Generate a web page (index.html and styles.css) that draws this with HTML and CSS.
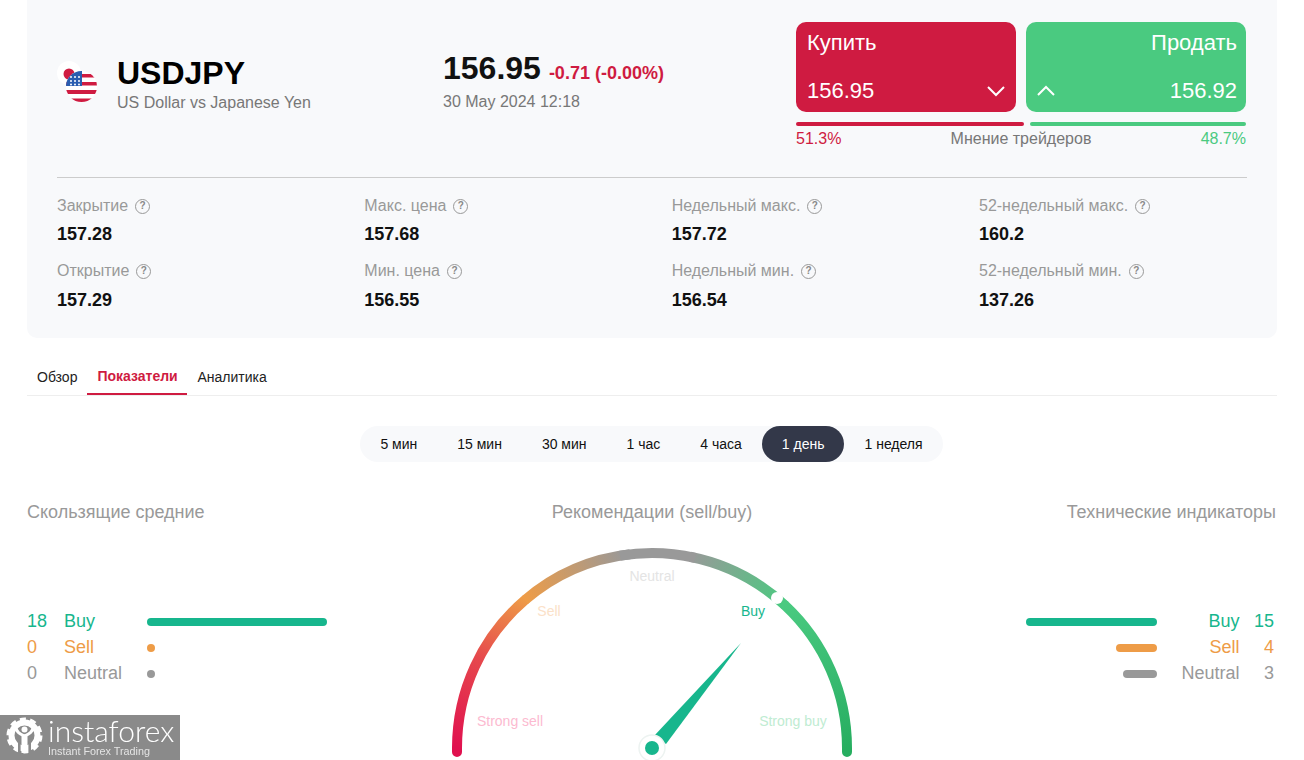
FILE: index.html
```html
<!DOCTYPE html>
<html lang="ru">
<head>
    <meta charset="UTF-8">
    <meta name="viewport" content="width=device-width, initial-scale=1.0">
    <title>USDJPY</title>
    <link rel="stylesheet" href="styles.css">
</head>
<body>
    <div class="page">
        <section class="quote-card">
            <div class="quote-top">
                <div class="symbol">
                    <svg class="flag" width="50" height="50" viewBox="0 0 50 50">
                        <circle cx="13" cy="13" r="12" fill="#fff"/>
                        <circle cx="13" cy="14" r="5.5" fill="#cf1b41"/>
                        <clipPath id="usClip"><circle cx="25.5" cy="26.5" r="15.5"/></clipPath>
                        <g clip-path="url(#usClip)">
                            <rect x="10" y="11" width="31" height="31" fill="#fff"/>
                            <rect x="10" y="14" width="31" height="3.5" fill="#cf1b41"/>
                            <rect x="10" y="22" width="31" height="3.5" fill="#cf1b41"/>
                            <rect x="10" y="30" width="31" height="4" fill="#cf1b41"/>
                            <rect x="10" y="38.5" width="31" height="3.5" fill="#cf1b41"/>
                            <rect x="10" y="11" width="16" height="15" fill="#2a5db0"/>
                            <g fill="#fff">
                                <circle cx="15" cy="17" r="1"/><circle cx="19" cy="17" r="1"/><circle cx="23" cy="17" r="1"/>
                                <circle cx="15" cy="21" r="1"/><circle cx="19" cy="21" r="1"/><circle cx="23" cy="21" r="1"/>
                                <circle cx="15" cy="24.5" r="1"/><circle cx="19" cy="24.5" r="1"/><circle cx="23" cy="24.5" r="1"/>
                            </g>
                        </g>
                    </svg>
                    <div class="symbol-text">
                        <div class="symbol-name">USDJPY</div>
                        <div class="symbol-desc">US Dollar vs Japanese Yen</div>
                    </div>
                </div>
                <div class="price-block">
                    <div class="price-line">
                        <span class="price">156.95</span>
                        <span class="change">-0.71 (-0.00%)</span>
                    </div>
                    <div class="price-date">30 May 2024 12:18</div>
                </div>
                <div class="trade">
                    <div class="trade-buttons">
                        <div class="trade-btn buy-btn">
                            <div class="trade-title">Купить</div>
                            <div class="trade-row">
                                <span>156.95</span>
                                <svg width="20" height="12" viewBox="0 0 20 12"><path d="M2 2l8 8 8-8" fill="none" stroke="#fff" stroke-width="2"/></svg>
                            </div>
                        </div>
                        <div class="trade-btn sell-btn">
                            <div class="trade-title">Продать</div>
                            <div class="trade-row">
                                <svg width="20" height="12" viewBox="0 0 20 12"><path d="M2 10l8-8 8 8" fill="none" stroke="#fff" stroke-width="2"/></svg>
                                <span>156.92</span>
                            </div>
                        </div>
                    </div>
                    <div class="sentiment-bars">
                        <div class="bar-red"></div>
                        <div class="bar-green"></div>
                    </div>
                    <div class="sentiment-text">
                        <span class="red">51.3%</span>
                        <span class="sentiment-title">Мнение трейдеров</span>
                        <span class="green">48.7%</span>
                    </div>
                </div>
            </div>

            <div class="stats">
                <div class="stat">
                    <div class="stat-label">Закрытие <i class="help">?</i></div>
                    <div class="stat-value">157.28</div>
                </div>
                <div class="stat">
                    <div class="stat-label">Макс. цена <i class="help">?</i></div>
                    <div class="stat-value">157.68</div>
                </div>
                <div class="stat">
                    <div class="stat-label">Недельный макс. <i class="help">?</i></div>
                    <div class="stat-value">157.72</div>
                </div>
                <div class="stat">
                    <div class="stat-label">52-недельный макс. <i class="help">?</i></div>
                    <div class="stat-value">160.2</div>
                </div>
                <div class="stat">
                    <div class="stat-label">Открытие <i class="help">?</i></div>
                    <div class="stat-value">157.29</div>
                </div>
                <div class="stat">
                    <div class="stat-label">Мин. цена <i class="help">?</i></div>
                    <div class="stat-value">156.55</div>
                </div>
                <div class="stat">
                    <div class="stat-label">Недельный мин. <i class="help">?</i></div>
                    <div class="stat-value">156.54</div>
                </div>
                <div class="stat">
                    <div class="stat-label">52-недельный мин. <i class="help">?</i></div>
                    <div class="stat-value">137.26</div>
                </div>
            </div>
        </section>

        <nav class="tabs">
            <a class="tab">Обзор</a>
            <a class="tab active">Показатели</a>
            <a class="tab">Аналитика</a>
        </nav>

        <div class="periods-wrap">
            <div class="periods">
                <a class="period">5 мин</a>
                <a class="period">15 мин</a>
                <a class="period">30 мин</a>
                <a class="period">1 час</a>
                <a class="period">4 часа</a>
                <a class="period active">1 день</a>
                <a class="period">1 неделя</a>
            </div>
        </div>

        <div class="indicators">
            <div class="side">
                <h3 class="side-title">Скользящие средние</h3>
                <div class="rows">
                    <div class="row buy"><span class="num">18</span><span class="name">Buy</span><span class="line" style="width:180px"></span></div>
                    <div class="row sell"><span class="num">0</span><span class="name">Sell</span><span class="line" style="width:8px"></span></div>
                    <div class="row neutral"><span class="num">0</span><span class="name">Neutral</span><span class="line" style="width:8px"></span></div>
                </div>
            </div>

            <div class="center">
                <h3 class="side-title">Рекомендации (sell/buy)</h3>
                <svg class="gauge" width="420" height="220" viewBox="442 540 420 220">
                    <defs>
                        <linearGradient id="g1" gradientUnits="userSpaceOnUse" x1="457" y1="748" x2="525" y2="598">
                            <stop offset="0" stop-color="#e0114f"/>
                            <stop offset="0.55" stop-color="#e6484d"/>
                            <stop offset="1" stop-color="#ee9c47"/>
                        </linearGradient>
                        <linearGradient id="g2" gradientUnits="userSpaceOnUse" x1="525" y1="598" x2="625" y2="553">
                            <stop offset="0" stop-color="#ee9c47"/>
                            <stop offset="1" stop-color="#999999"/>
                        </linearGradient>
                        <linearGradient id="g3" gradientUnits="userSpaceOnUse" x1="690" y1="556" x2="785" y2="605">
                            <stop offset="0" stop-color="#999999"/>
                            <stop offset="1" stop-color="#4aca80"/>
                        </linearGradient>
                        <linearGradient id="g4" gradientUnits="userSpaceOnUse" x1="785" y1="605" x2="847" y2="748">
                            <stop offset="0" stop-color="#4aca80"/>
                            <stop offset="0.6" stop-color="#36b96f"/>
                            <stop offset="1" stop-color="#27ae60"/>
                        </linearGradient>
                    </defs>
                    <g fill="none" stroke-width="10">
                        <path d="M457 752V748A195 195 0 0 1 525 600" stroke="url(#g1)" stroke-linecap="round"/>
                        <path d="M525 600A195 195 0 0 1 630 554.25" stroke="url(#g2)"/>
                        <path d="M690 556.74A195 195 0 0 1 785 605.4" stroke="url(#g3)"/>
                        <path d="M620 555.64A195 195 0 0 1 695 557.8" stroke="#999"/>
                        <path d="M785 605.4A195 195 0 0 1 847 748V752" stroke="url(#g4)" stroke-linecap="round"/>
                    </g>
                    <circle cx="777" cy="598" r="6" fill="#fff"/>
                    <g class="gauge-labels" text-anchor="middle">
                        <text x="652" y="581" fill="#e4e4e4">Neutral</text>
                        <text x="549" y="616" fill="#fbe1c8">Sell</text>
                        <text x="753" y="616" fill="#17b68d">Buy</text>
                        <text x="510" y="726" fill="#fcbad0">Strong sell</text>
                        <text x="793" y="726" fill="#c0ecd2">Strong buy</text>
                    </g>
                    <polygon points="741,643 654,736 666,744" fill="#17b68d"/>
                    <circle cx="652" cy="748" r="13" fill="#fff" stroke="#edf3f1" stroke-width="1.5"/>
                    <circle cx="652" cy="748" r="7" fill="#17b68d"/>
                </svg>
            </div>

            <div class="side side-right">
                <h3 class="side-title">Технические индикаторы</h3>
                <div class="rows">
                    <div class="row buy"><span class="line" style="width:131px"></span><span class="name">Buy</span><span class="num">15</span></div>
                    <div class="row sell"><span class="line" style="width:41px"></span><span class="name">Sell</span><span class="num">4</span></div>
                    <div class="row neutral"><span class="line" style="width:34px"></span><span class="name">Neutral</span><span class="num">3</span></div>
                </div>
            </div>
        </div>
    </div>

    <div class="logo">
        <svg width="40" height="40" viewBox="0 0 40 40">
            <g fill="none" stroke="#fff">
                <circle cx="19.5" cy="19.5" r="13" stroke-width="6"/>
                <circle cx="19.5" cy="19.5" r="16.2" stroke-width="3.6" stroke-dasharray="6 4.18"/>
            </g>
            <rect x="13" y="26" width="2.6" height="13" fill="#8a8a8a"/>
            <rect x="23.4" y="26" width="2.6" height="13" fill="#8a8a8a"/>
            <circle cx="19.5" cy="13.5" r="3" fill="#fff"/>
            <path d="M11 11c0 5 4 7 8.500 9 4.500-2 8.500-4 8.500-9" fill="none" stroke="#fff" stroke-width="3"/>
            <rect x="16.500" y="20" width="6" height="17" fill="#fff"/>
        </svg>
        <div class="logo-text">
            <div class="logo-name">instaforex</div>
            <div class="logo-sub">Instant Forex Trading</div>
        </div>
    </div>
</body>
</html>
```

FILE: styles.css
```css
* {
    box-sizing: border-box;
}
html, body {
    height: 760px;
    overflow: hidden;
}
body {
    margin: 0;
    font-family: "Liberation Sans", Arial, sans-serif;
    background-color: #fff;
    color: #111;
}
.page {
    padding: 0 27px;
}

/* карточка котировки */
.quote-card {
    height: 338px;
    padding: 22px 30px 0;
    background-color: #f8f9fb;
    border-radius: 0 0 10px 10px;
}
.quote-top {
    display: flex;
    height: 156px;
    border-bottom: 1px solid #ccc;
}
.symbol {
    display: flex;
    width: 386px;
    padding-top: 25px;
}
.flag {
    flex: none;
    margin: 13px 1px 0 -1px;
}
.symbol-text {
    padding-left: 10px;
}
.symbol-name {
    font-size: 32px;
    font-weight: bold;
    line-height: 52px;
    color: #000;
}
.symbol-desc {
    font-size: 16px;
    line-height: 18px;
    color: #777;
    margin-top: -5px;
}
.price-block {
    padding-top: 26px;
}
.price-line {
    display: flex;
    align-items: baseline;
    gap: 8px;
}
.price {
    font-size: 32px;
    font-weight: bold;
    line-height: 40px;
    color: #111;
}
.change {
    font-size: 18px;
    font-weight: bold;
    color: #cf1b41;
}
.price-date {
    margin-top: 5px;
    font-size: 16px;
    line-height: 18px;
    color: #777;
}
.trade {
    width: 451px;
    margin-left: auto;
}
.trade-buttons {
    display: flex;
    gap: 10px;
}
.trade-btn {
    width: 220px;
    height: 90px;
    padding: 9px 9px 0 11px;
    border-radius: 10px;
    color: #fff;
    font-size: 22px;
}
.buy-btn {
    background-color: #cf1b41;
}
.sell-btn {
    background-color: #4aca80;
    text-align: right;
}
.trade-title {
    line-height: 24px;
}
.trade-row {
    display: flex;
    align-items: center;
    justify-content: space-between;
    margin-top: 24px;
    line-height: 24px;
}
.buy-btn .trade-row svg {
    margin-right: 1px;
}
.sell-btn .trade-row svg {
    margin-left: -1px;
}
.sentiment-bars {
    display: flex;
    justify-content: space-between;
    margin-top: 10px;
    padding-right: 1px;
}
.bar-red, .bar-green {
    height: 4px;
    border-radius: 2px;
}
.bar-red {
    width: 228px;
    background-color: #cf1b41;
}
.bar-green {
    width: 216px;
    background-color: #4aca80;
}
.sentiment-text {
    display: flex;
    justify-content: space-between;
    margin-top: 4px;
    padding-right: 1px;
    font-size: 16px;
    line-height: 18px;
}
.sentiment-title {
    color: #777;
}
.red {
    color: #cf1b41;
}
.green {
    color: #4aca80;
}

/* статистика */
.stats {
    display: grid;
    grid-template-columns: repeat(4, 307.33px);
    row-gap: 17px;
    padding-top: 18px;
}
.stat-label {
    display: flex;
    align-items: center;
    gap: 7px;
    font-size: 16px;
    line-height: 20px;
    color: #999;
}
.help {
    display: inline-block;
    width: 15px;
    height: 15px;
    border: 1.5px solid #999;
    border-radius: 50%;
    font-size: 10px;
    font-style: normal;
    font-weight: bold;
    line-height: 12px;
    text-align: center;
    color: #888;
}
.stat-value {
    margin-top: 8px;
    font-size: 18px;
    font-weight: bold;
    line-height: 20px;
    color: #111;
}
.stat:nth-child(n+5) .stat-value {
    margin-top: 9px;
}

/* вкладки */
.tabs {
    display: flex;
    height: 58px;
    align-items: flex-end;
    border-bottom: 1px solid #eee;
}
.tab {
    padding: 0 10px 9px;
    font-size: 14px;
    line-height: 17px;
    color: #222;
}
.tab.active {
    width: 100px;
    padding-bottom: 8px;
    font-weight: bold;
    white-space: nowrap;
    color: #cf1b41;
    border-bottom: 2px solid #cf1b41;
}
.periods-wrap {
    display: flex;
    justify-content: center;
    margin-top: 30px;
    padding-right: 1px;
}
.periods {
    display: flex;
    height: 36px;
    border-radius: 18px;
    background-color: #f8f9fb;
}
.period {
    padding: 0 20px;
    font-size: 14px;
    line-height: 36px;
    color: #111;
}
.period.active {
    background-color: #333849;
    border-radius: 18px;
    color: #fff;
}

/* индикаторы */
.indicators {
    display: grid;
    grid-template-columns: 1fr 420px 1fr;
    margin-top: 40px;
}
.side-title {
    margin: 0;
    font-size: 18px;
    font-weight: normal;
    line-height: 20px;
    color: #999;
}
.center {
    text-align: center;
}
.gauge {
    display: block;
    margin-top: 18px;
}
.gauge-labels {
    font-size: 14px;
}
.side-right {
    text-align: right;
}
.side-right .side-title {
    padding-right: 1px;
}
.rows {
    margin-top: 86px;
}
.row {
    display: flex;
    align-items: center;
    height: 26px;
    font-size: 18px;
}
.row .num {
    width: 37px;
}
.row .name {
    width: 83px;
}
.row .line {
    height: 8px;
    margin-top: 2px;
    border-radius: 4px;
}
.side-right .row {
    justify-content: flex-end;
    padding-right: 3px;
}
.side-right .row .num {
    width: 34.5px;
}
.side-right .row .name {
    width: 82.5px;
}
.buy {
    color: #17b68d;
}
.buy .line {
    background-color: #17b68d;
}
.sell {
    color: #ee9c47;
}
.sell .line {
    background-color: #ee9c47;
}
.neutral {
    color: #999;
}
.neutral .line {
    background-color: #999;
}

/* логотип поверх страницы */
.logo {
    position: fixed;
    left: 0;
    bottom: 0;
    display: flex;
    width: 180px;
    height: 45px;
    padding: 1px 0 0 5px;
    background-color: #8a8a8a;
    color: #fff;
}
.logo-text {
    margin-left: 3px;
}
.logo-name {
    font-family: Lato, sans-serif;
    font-size: 30px;
    font-weight: 300;
    line-height: 29px;
}
.logo-sub {
    font-size: 10.8px;
    line-height: 12px;
    color: #e4e4e4;
}
```
